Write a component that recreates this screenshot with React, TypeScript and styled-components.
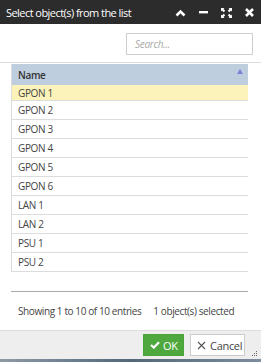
import React from 'react'
import styled, { createGlobalStyle } from 'styled-components'

const rows = ['GPON 1', 'GPON 2', 'GPON 3', 'GPON 4', 'GPON 5', 'GPON 6', 'LAN 1', 'LAN 2', 'PSU 1', 'PSU 2']

const GlobalStyle = createGlobalStyle`
  html, body {
    margin: 0;
    padding: 0;
  }
  body {
    width: 261px;
    height: 362px;
    overflow: hidden;
    background: linear-gradient(to right, #8c9aa6, #54687a 50%, #7d8d9b);
    font-family: 'Open Sans', 'Noto Sans', sans-serif;
  }
`

const App = () => {
  return (
    <>
      <GlobalStyle />
      <Dialog>
        <TitleBar>
          <Title>Select object(s) from the list</Title>
          <TitleIcons>
            <IconButton>
              <svg width='11' height='8' viewBox='0 0 11 8'>
                <path d='M1.5 6.5 L5.5 2.5 L9.5 6.5' fill='none' stroke='#fff' strokeWidth='2.6' />
              </svg>
            </IconButton>
            <IconButton>
              <svg width='9' height='3' viewBox='0 0 9 3'>
                <rect x='0' y='0' width='9' height='2.4' fill='#fff' />
              </svg>
            </IconButton>
            <IconButton>
              <svg width='11' height='10' viewBox='0 0 11 10'>
                <path d='M0 0 H3.5 L2.5 1 L4.2 2.7 L2.7 4.2 L1 2.5 L0 3.5 Z' fill='#fff' />
                <path d='M11 0 H7.5 L8.5 1 L6.8 2.7 L8.3 4.2 L10 2.5 L11 3.5 Z' fill='#fff' />
                <path d='M0 10 H3.5 L2.5 9 L4.2 7.3 L2.7 5.8 L1 7.5 L0 6.5 Z' fill='#fff' />
                <path d='M11 10 H7.5 L8.5 9 L6.8 7.3 L8.3 5.8 L10 7.5 L11 6.5 Z' fill='#fff' />
              </svg>
            </IconButton>
            <IconButton>
              <svg width='9' height='9' viewBox='0 0 9 9'>
                <path d='M1 1 L8 8 M8 1 L1 8' stroke='#fff' strokeWidth='2.6' />
              </svg>
            </IconButton>
          </TitleIcons>
        </TitleBar>

        <SearchRow>
          <SearchInput placeholder='Search...' />
        </SearchRow>

        <Body>
          <Table>
            <thead>
              <tr>
                <HeadCell>
                  Name
                  <SortArrow />
                </HeadCell>
              </tr>
            </thead>
            <tbody>
              {rows.map((name, i) => (
                <Row key={name} selected={i === 0}>
                  <Cell>{name}</Cell>
                </Row>
              ))}
            </tbody>
          </Table>
          <Filler />
          <Info>
            <span>Showing 1 to 10 of 10 entries</span>
            <span>1 object(s) selected</span>
          </Info>
        </Body>

        <ButtonBar>
          <OkButton>
            <svg width='10' height='8' viewBox='0 0 10 8'>
              <path d='M1 4 L3.8 6.6 L9 1.2' fill='none' stroke='#fff' strokeWidth='2.2' />
            </svg>
            OK
          </OkButton>
          <CancelButton>
            <svg width='9' height='9' viewBox='0 0 9 9'>
              <path d='M1 1 L8 8 M8 1 L1 8' stroke='#555' strokeWidth='1.1' />
            </svg>
            Cancel
          </CancelButton>
          <Grip>
            <svg width='6' height='6' viewBox='0 0 6 6'>
              <rect x='4' y='0' width='1' height='1' fill='#666' />
              <rect x='2' y='2' width='1' height='1' fill='#666' />
              <rect x='4' y='2' width='1' height='1' fill='#666' />
              <rect x='0' y='4' width='1' height='1' fill='#666' />
              <rect x='2' y='4' width='1' height='1' fill='#666' />
              <rect x='4' y='4' width='1' height='1' fill='#666' />
            </svg>
          </Grip>
        </ButtonBar>
      </Dialog>
    </>
  )
}

export default App

type RowProps = { selected?: boolean }

const Dialog = styled.div`
  box-sizing: border-box;
  width: 261px;
  height: 359px;
  display: flex;
  flex-direction: column;
  background-color: #fff;
`

const TitleBar = styled.div`
  box-sizing: border-box;
  height: 24px;
  flex-shrink: 0;
  display: flex;
  align-items: center;
  justify-content: space-between;
  padding: 0 6px 0 6px;
  background-color: #2c2c2c;
`

const Title = styled.span`
  color: #fff;
  font-size: 11px;
  letter-spacing: -0.55px;
  white-space: nowrap;
`

const TitleIcons = styled.div`
  display: flex;
  align-items: center;
  gap: 12px;
  padding-top: 1px;
`

const IconButton = styled.span`
  display: flex;
  align-items: center;
  justify-content: center;
  width: 11px;
  height: 12px;
`

const SearchRow = styled.div`
  display: flex;
  justify-content: flex-end;
  padding: 9px 8px 7px 0;
  border-bottom: 1px solid #dcdcdc;
`

const SearchInput = styled.input`
  box-sizing: border-box;
  width: 127px;
  height: 22px;
  padding: 0 8px;
  border: 1px solid #cfcfcf;
  outline: none;
  font-family: 'Open Sans', sans-serif;
  font-size: 10px;

  &::placeholder {
    color: #aaa;
    font-style: italic;
    letter-spacing: -0.3px;
  }
`

const Body = styled.div`
  flex: 1;
  display: flex;
  flex-direction: column;
  padding: 1px 13px 0 11px;
`

const Table = styled.table`
  width: 100%;
  border-collapse: collapse;
  font-size: 10px;
  letter-spacing: -0.35px;
  color: #444;
  border-left: 1px solid #dcdcdc;
`

const HeadCell = styled.th`
  position: relative;
  height: 21px;
  padding: 0 6px;
  text-align: left;
  font-weight: 600;
  color: #333;
  background-color: #bfcedf;
`

const SortArrow = styled.span`
  position: absolute;
  right: 5px;
  top: 5px;
  width: 0;
  height: 0;
  border-left: 3px solid transparent;
  border-right: 3px solid transparent;
  border-bottom: 5px solid #7b80d6;
`

const Row = styled.tr<RowProps>`
  background-color: ${({ selected }) => (selected ? '#fbf3b9' : '#fff')};
  border-bottom: 1px solid #dcdcdc;

  &:first-child td {
    height: 15px;
    line-height: 12px;
  }
`

const Cell = styled.td`
  height: 18px;
  padding: 0 6px;
  white-space: nowrap;
`

const Filler = styled.div`
  height: 19px;
  border-bottom: 1px solid #aaa;
`

const Info = styled.div`
  display: flex;
  gap: 12px;
  padding: 12px 0 0 7px;
  font-size: 10px;
  letter-spacing: -0.4px;
  white-space: nowrap;
  color: #444;
`

const ButtonBar = styled.div`
  position: relative;
  flex-shrink: 0;
  display: flex;
  align-items: center;
  justify-content: flex-end;
  gap: 6px;
  height: 28px;
  padding: 0 16px 0 0;
  background-color: #eee;
  border-top: 1px solid #ddd;
`

const BaseButton = styled.button`
  box-sizing: border-box;
  display: flex;
  align-items: center;
  gap: 3px;
  height: 22px;
  font-family: 'Open Sans', sans-serif;
  font-size: 11px;
  letter-spacing: -0.3px;
  cursor: pointer;

  svg {
    flex-shrink: 0;
  }
`

const OkButton = styled(BaseButton)`
  width: 41px;
  padding: 0 6px;
  color: #fff;
  border: 1px solid #4aa43a;
  background-color: #4ea83e;
`

const CancelButton = styled(BaseButton)`
  width: 55px;
  padding: 0 6px;
  gap: 4px;
  color: #444;
  border: 1px solid #ccc;
  background-color: #fff;
`

const Grip = styled.span`
  position: absolute;
  right: 3px;
  bottom: 2px;
  display: flex;
`
